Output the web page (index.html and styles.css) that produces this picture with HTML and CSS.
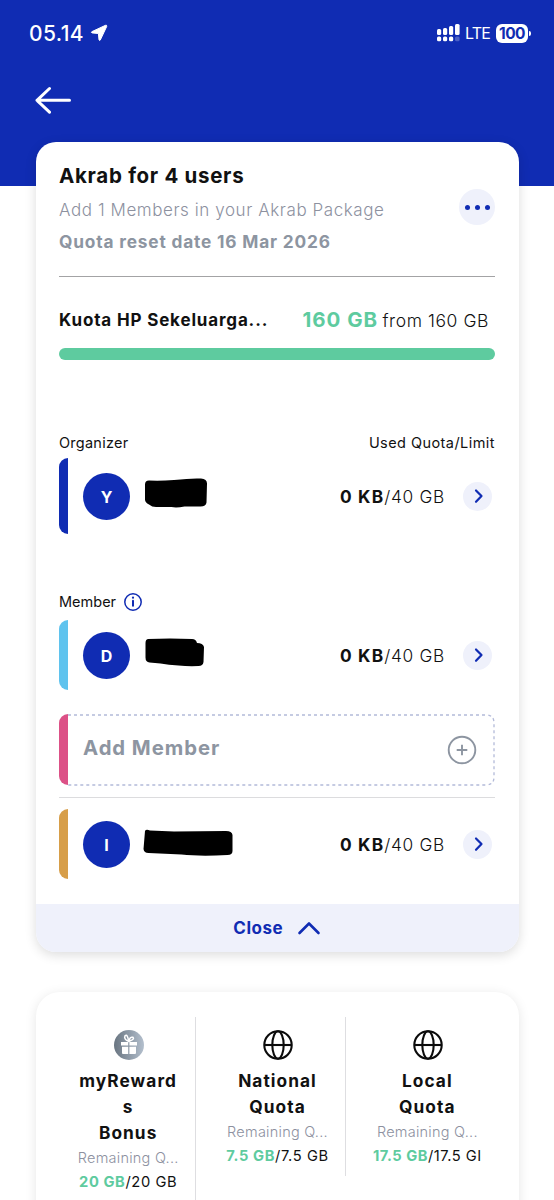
FILE: index.html
```html
<!DOCTYPE html>
<html lang="en">
<head>
<meta charset="utf-8">
<title>Akrab Package</title>
<link rel="stylesheet" href="styles.css">
</head>
<body>
<div class="screen">
  <header class="header">
    <div class="status">
      <span class="time">05.14</span>
      <svg class="loc" width="18" height="18" viewBox="0 0 18 18"><path d="M15.500 1.300 1.800 7.700q-1 .8.300 1.200l6.300.6.600 6.300q.5 1.300 1.300.2L16.700 2.500Q17 .7 15.500 1.300z" fill="#fff" stroke="#fff" stroke-linejoin="round"/></svg>
      <span class="spacer"></span>
      <svg class="signal" width="24" height="20" viewBox="0 0 24 20" fill="#fff"><rect x="0" y="6" width="4.200" height="6" rx="1.500"/><rect x="6" y="5" width="4.200" height="7" rx="1.500"/><rect x="12" y="3" width="4.200" height="9" rx="1.500"/><rect x="18" y="1" width="4.600" height="11" rx="1.500"/><rect x="0" y="13.500" width="4.200" height="4.700" rx="1.500"/><rect x="6" y="13.500" width="4.200" height="4.700" rx="1.500"/><rect x="12" y="13.500" width="4.200" height="4.700" rx="1.500"/><rect x="18" y="13.500" width="4.600" height="4.700" rx="1.500" opacity=".25"/></svg>
      <span class="lte">LTE</span>
      <span class="battery">100</span><span class="cap"></span>
    </div>
    <svg class="back" width="38" height="30" viewBox="0 0 38 30" fill="none" stroke="#fff" stroke-width="3" stroke-linecap="round" stroke-linejoin="round"><path d="M34.500 15.300H2M14.500 3.500 2 15.300l12.500 11.900"/></svg>
  </header>

  <main class="card">
    <section class="body">
      <div class="intro">
        <div>
          <h1 class="title">Akrab for 4 users</h1>
          <p class="sub">Add 1 Members in your Akrab Package</p>
          <p class="reset">Quota reset date 16 Mar 2026</p>
        </div>
        <span class="more"><i></i><i></i><i></i></span>
      </div>
      <div class="quota">
        <span class="quota-name">Kuota HP Sekeluarga...</span>
        <span class="quota-val"><b>160 GB</b><span>from 160 GB</span></span>
      </div>
      <div class="bar"></div>

      <div class="labels"><span class="organizer">Organizer</span><span class="used">Used Quota/Limit</span></div>
      <div class="row row-first">
        <span class="edge blue"></span><span class="avatar">Y</span>
        <svg class="mask" width="96" height="40" viewBox="0 0 96 40"><path d="M7 7.500Q19 8 32 7q17-2 27-1.500 6 .5 6 5l-.5 19q-.5 4-6 4h-16q-8 1.500-13 .5H14q-4 0-7-2.500-4-2-4-5V11.500q0-4 4-4z"/></svg>
        <span class="usage"><b>0 KB</b>/40 GB</span>
        <span class="go"><svg width="28" height="28" viewBox="0 0 28 28"><path d="M12 8.500 17.500 14 12 19.800"/></svg></span>
      </div>

      <div class="labels member"><span class="member-text">Member</span>
        <svg width="20" height="20" viewBox="0 0 20 20" fill="none" stroke="#102cb3" stroke-width="1.500"><circle cx="10" cy="10" r="8.200"/><path d="M10 8.800v5" stroke-width="2" stroke-linecap="round"/><circle cx="10" cy="5.700" r="1.100" fill="#102cb3" stroke="none"/></svg>
      </div>
      <div class="row row-second">
        <span class="edge sky"></span><span class="avatar">D</span>
        <svg class="mask" width="96" height="40" viewBox="0 0 96 40"><path d="M6 7Q28 6 50 7q4 0 5 4 6 0 7 4l-.5 15q-.5 4-5 4-10 .5-20-.5-10-.5-18-2l-11-1q-4-.5-4-5V11q0-4 3-4z"/></svg>
        <span class="usage"><b>0 KB</b>/40 GB</span>
        <span class="go"><svg width="28" height="28" viewBox="0 0 28 28"><path d="M12 8.500 17.500 14 12 19.800"/></svg></span>
      </div>
      <div class="add">
        <svg class="dash" width="436" height="72" viewBox="0 0 436 72"><path d="M9 1H427Q435 1 435 9V63Q435 71 427 71H9" fill="none" stroke="#b3bad9" stroke-width="1.300" stroke-dasharray="3 3"/></svg>
        <span class="edge pink"></span>
        <span class="add-text">Add Member</span>
        <svg class="plus" width="30" height="30" viewBox="0 0 30 30" fill="none" stroke="#8d95a1" stroke-width="1.900"><circle cx="15" cy="15" r="13.300"/><path d="M15 9.700v10.600M9.700 15h10.600"/></svg>
      </div>
      <div class="row row-third">
        <span class="edge gold"></span><span class="avatar">I</span>
        <svg class="mask low" width="96" height="40" viewBox="0 0 96 40"><path d="M3 8q1-2 5-.5l24 1 52-.5q6 0 6.500 4v16q0 4-5 4-28 1.500-46-.5l-33-1.500q-4.500 0-5-4z"/></svg>
        <span class="usage"><b>0 KB</b>/40 GB</span>
        <span class="go"><svg width="28" height="28" viewBox="0 0 28 28"><path d="M12 8.500 17.500 14 12 19.800"/></svg></span>
      </div>
    </section>
    <footer class="close"><span class="close-text">Close</span><svg width="24" height="16" viewBox="0 0 24 16" fill="none" stroke="#102cb3" stroke-width="2.600" stroke-linecap="round" stroke-linejoin="round"><path d="M2.500 13 12 3.500 21.500 13"/></svg></footer>
  </main>

  <section class="packs">
    <article class="pack tall">
      <svg class="icon" width="30" height="30" viewBox="0 0 30 30"><defs><linearGradient id="g"><stop stop-color="#697581"/><stop offset="1" stop-color="#b3bfcd"/></linearGradient></defs><circle cx="15" cy="15" r="15" fill="url(#g)"/><path d="M7 12h7.200v3.600H7zM15.400 12H23v3.600h-7.600zM8 16.800h6.200V24H9q-1 0-1-1zM15.400 16.800H22V23q0 1-1 1h-5.600z" fill="#fff"/><path d="M14.600 11.300Q9.500 9 11 5.900q2.600-2.400 3.600 5.400ZM15.200 11.300q.5-5 3.800-4 2 2-3.800 4z" fill="none" stroke="#fff" stroke-width="1.500"/></svg>
      <h2 class="name">myReward<br>s<br>Bonus</h2>
      <p class="remain">Remaining Q...</p>
      <p class="amount"><b>20 GB</b>/20 GB</p>
    </article>
    <article class="pack">
      <svg class="icon" width="30" height="30" viewBox="0 0 30 30" fill="none" stroke="#0b0b0b" stroke-width="2.100"><circle cx="15" cy="15" r="13.700"/><ellipse cx="15" cy="15" rx="5.700" ry="13.700"/><path d="M1 15h28"/></svg>
      <h2 class="name">National<br>Quota</h2>
      <p class="remain">Remaining Q...</p>
      <p class="amount"><b>7.5 GB</b>/7.5 GB</p>
    </article>
    <article class="pack">
      <svg class="icon" width="30" height="30" viewBox="0 0 30 30" fill="none" stroke="#0b0b0b" stroke-width="2.100"><circle cx="15" cy="15" r="13.700"/><ellipse cx="15" cy="15" rx="5.700" ry="13.700"/><path d="M1 15h28"/></svg>
      <h2 class="name">Local<br>Quota</h2>
      <p class="remain">Remaining Q...</p>
      <p class="amount local"><b>17.5 GB</b>/17.5 GI</p>
    </article>
  </section>
</div>
</body>
</html>
```
FILE: styles.css
```css
* { box-sizing: border-box; margin: 0; padding: 0; }
body { background: #fff; font-family: Inter, "Liberation Sans", sans-serif; color: #111; }
.screen { height: 1200px; overflow: hidden; }
h1, h2, p { white-space: nowrap; }
b { font-weight: 700; }

.header { height: 186px; background: #102cb3; }
.status { height: 68px; padding: 0 23px 2px 29px; display: flex; align-items: center; color: #fff; }
.time { font-size: 21px; font-weight: 500; letter-spacing: .4px; }
.loc { margin-left: 6px; }
.spacer { flex: 1; }
.signal { margin-right: 4px; }
.lte { font-size: 16px; font-weight: 400; letter-spacing: -.8px; margin-right: 6px; }
.battery { width: 32px; height: 19px; border-radius: 6px; background: #fff; color: #102cb3; font-size: 15.500px; font-weight: 700; line-height: 19px; text-align: center; letter-spacing: -.5px; }
.cap { width: 2px; height: 5px; margin-left: 1px; border-radius: 0 2px 2px 0; background: #fff; }
.back { display: block; margin: 17px 0 0 35px; }

.card { margin: -44px 35.500px 0 36px; height: 810px; border-radius: 20px; background: #fff; overflow: hidden; box-shadow: 0 3px 12px rgba(0,0,0,.14); position: relative; }
.body { height: 762px; padding: 20px 23.500px 0 23px; }
.intro { height: 115px; display: flex; justify-content: space-between; border-bottom: 1px solid #a3a3a5; }
.title { font-size: 20.500px; line-height: 27px; font-weight: 650; letter-spacing: .7px; }
.sub { font-size: 17px; line-height: 32px; margin-top: 5px; font-weight: 300; color: #8d919f; letter-spacing: .57px; }
.reset { font-size: 17.300px; line-height: 32px; font-weight: 650; color: #8d95a1; letter-spacing: .82px; }
.more { width: 36px; height: 36px; margin-top: 27px; border-radius: 50%; background: #eff1fb; display: flex; gap: 5px; align-items: center; justify-content: center; }
.more i { width: 5px; height: 5px; border-radius: 50%; background: #102cb3; }
.quota { height: 71px; padding: 14px 6px 0 0; display: flex; align-items: center; justify-content: space-between; white-space: nowrap; }
.quota-name { font-size: 17px; font-weight: 650; letter-spacing: .84px; }
.quota-val { display: flex; align-items: baseline; gap: 4.500px; font-size: 17.500px; font-weight: 300; letter-spacing: .58px; }
.quota-val b { color: #5ecb9f; font-size: 20.500px; letter-spacing: .95px; }
.bar { height: 12px; border-radius: 6px; background: #5ecb9f; }
.labels { display: flex; justify-content: space-between; margin-top: 71px; height: 24px; line-height: 24px; font-size: 14.500px; }
.organizer { letter-spacing: .25px; }
.used { letter-spacing: .44px; }
.member { margin-top: 56px; justify-content: flex-start; align-items: center; gap: 7px; }
.row { display: flex; align-items: center; height: 70px; }
.row-first { height: 76px; margin-top: 3px; }
.row-second { margin-top: 6px; }
.row-third { margin-top: 24px; }
.edge { width: 9px; align-self: stretch; border-radius: 9px 0 0 9px; margin-right: 15px; }
.blue { background: #102cb3; }
.sky { background: #5fc3ee; }
.pink { background: #dc5187; }
.gold { background: #d79e49; }
.avatar { width: 47px; height: 47px; border-radius: 50%; background: #102cb3; color: #fff; font-size: 16px; font-weight: 700; line-height: 48px; text-align: center; }
.mask { margin: -6px 0 0 12px; fill: #000; }
.low { margin-top: -2px; }
.usage { margin: 0 0 0 auto; font-size: 17.300px; font-weight: 300; letter-spacing: .7px; }
.usage b { letter-spacing: 1.200px; }
.go { width: 29px; height: 29px; margin: 0 3px 0 18px; border-radius: 50%; background: #eff1fb; display: flex; align-items: center; justify-content: center; }
.go path { fill: none; stroke: #102cb3; stroke-width: 2.200; stroke-linecap: round; stroke-linejoin: round; }
.add { position: relative; display: flex; align-items: center; height: 71px; margin-top: 24px; }
.add::after { content: ""; position: absolute; left: 0; right: 0; top: 83px; height: 1px; background: #dcdcde; }
.dash { position: absolute; left: 0; top: 0; }
.add-text { font-size: 20.300px; font-weight: 650; color: #8d95a1; margin-top: -4px; letter-spacing: .95px; }
.plus { margin-left: auto; margin-right: 18px; }
.close { height: 48px; background: #eff1fb; display: flex; align-items: center; justify-content: center; gap: 14px; color: #102cb3; font-size: 17px; font-weight: 700; letter-spacing: .5px; }

.packs { margin: 40px 35.500px 0 36px; height: 260px; border-radius: 24px; background: #fff; box-shadow: 0 2px 12px rgba(0,0,0,.1); padding: 25px 23.500px 0 11px; display: grid; grid-template-columns: repeat(3, 1fr); align-items: start; }
.pack { height: 159px; min-width: 0; padding: 13px 0 0 14px; display: flex; flex-direction: column; align-items: center; }
.pack:not(:last-child) { border-right: 1px solid #dedee1; }
.pack.tall { height: 230px; }
.icon { position: relative; left: 1px; }
.name { margin-top: 8px; font-size: 17.300px; line-height: 26px; font-weight: 650; text-align: center; letter-spacing: 1.050px; }
.remain { font-size: 14.500px; line-height: 24px; font-weight: 300; color: #8d919f; letter-spacing: .25px; }
.amount { font-size: 14.700px; line-height: 24px; letter-spacing: .6px; }
.amount b { color: #5ecb9f; }
.local { letter-spacing: .5px; }
```
